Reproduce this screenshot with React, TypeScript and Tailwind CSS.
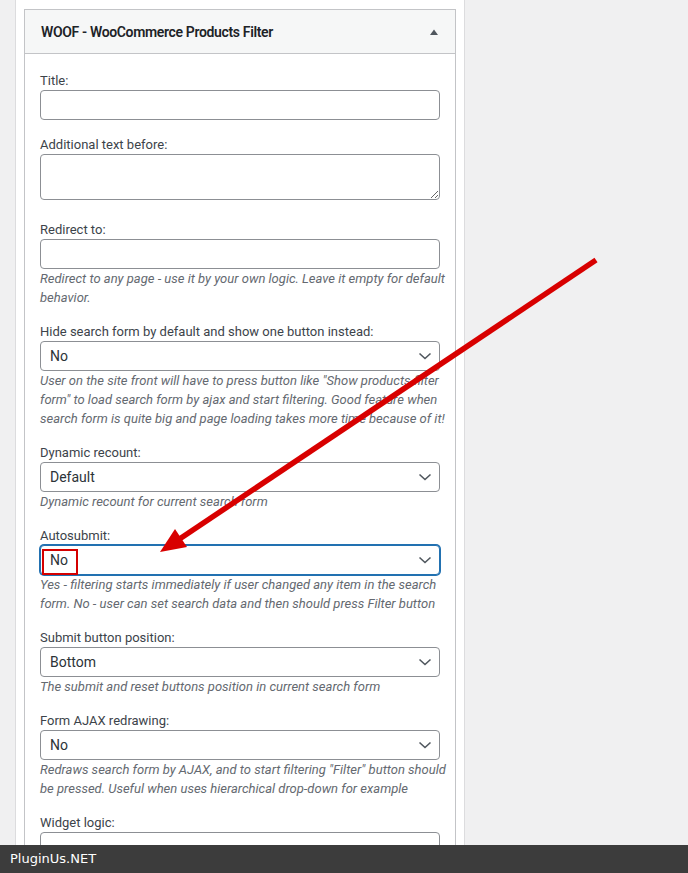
import { useState } from 'react'

type Field = {
  label: string
  kind: 'input' | 'textarea' | 'select'
  value?: string
  desc?: string[]
  focused?: boolean
}

const fields: Field[] = [
  { label: 'Title:', kind: 'input' },
  { label: 'Additional text before:', kind: 'textarea' },
  {
    label: 'Redirect to:',
    kind: 'input',
    desc: ['Redirect to any page - use it by your own logic. Leave it empty for default', 'behavior.'],
  },
  {
    label: 'Hide search form by default and show one button instead:',
    kind: 'select',
    value: 'No',
    desc: [
      'User on the site front will have to press button like "Show products filter',
      'form" to load search form by ajax and start filtering. Good feature when',
      'search form is quite big and page loading takes more time because of it!',
    ],
  },
  {
    label: 'Dynamic recount:',
    kind: 'select',
    value: 'Default',
    desc: ['Dynamic recount for current search form'],
  },
  {
    label: 'Autosubmit:',
    kind: 'select',
    value: 'No',
    focused: true,
    desc: [
      'Yes - filtering starts immediately if user changed any item in the search',
      'form. No - user can set search data and then should press Filter button',
    ],
  },
  {
    label: 'Submit button position:',
    kind: 'select',
    value: 'Bottom',
    desc: ['The submit and reset buttons position in current search form'],
  },
  {
    label: 'Form AJAX redrawing:',
    kind: 'select',
    value: 'No',
    desc: [
      'Redraws search form by AJAX, and to start filtering "Filter" button should',
      'be pressed. Useful when uses hierarchical drop-down for example',
    ],
  },
  { label: 'Widget logic:', kind: 'input' },
]

function Chevron() {
  return (
    <svg width="16" height="16" viewBox="0 0 16 16" className="absolute right-[6px] top-1/2 -translate-y-1/2">
      <path d="M2.5 5.5 L8 10.5 L13.5 5.5" fill="none" stroke="#50575e" strokeWidth="1.6" />
    </svg>
  )
}

function FieldControl({ f }: { f: Field }) {
  if (f.kind === 'textarea') {
    return (
      <div className="pb-[5px]">
        <textarea className="block w-full h-[46px] rounded-[4px] border border-[#8c8f94] bg-white outline-none" />
      </div>
    )
  }
  if (f.kind === 'select') {
    return (
      <div
        className={
          f.focused
            ? 'relative h-[30px] w-full rounded-[4px] border border-[#2271b1] shadow-[0_0_0_1px_#2271b1] bg-white'
            : 'relative h-[30px] w-full rounded-[4px] border border-[#8c8f94] bg-white'
        }
      >
        <span className="absolute left-[9px] top-0 leading-[28px] text-[14px] text-[#2c3338]">{f.value}</span>
        {f.focused && (
          <span className="absolute left-[1px] top-[3px] w-[36px] h-[26px] border-2 border-[#d40000]" />
        )}
        <Chevron />
      </div>
    )
  }
  return <input className="block h-[30px] w-full rounded-[4px] border border-[#8c8f94] bg-white outline-none" />
}

export default function App() {
  const [open] = useState(true)

  return (
    <div
      className="relative h-[873px] w-[688px] overflow-hidden bg-[#f0f0f1]"
      style={{ fontFamily: 'Roboto, "Noto Sans", sans-serif' }}
    >
      <div className="ml-[15px] w-[450px] h-full border-x border-[#dcdcde] bg-white px-[8px] pt-[9px]">
        <div className="border border-[#c3c4c7] bg-white">
          {/* widget header */}
          <div className="flex h-[44px] items-center justify-between border-b border-[#c3c4c7] bg-[#f6f7f7] pl-[16px] pr-[17px]">
            <span className="pt-[1px] text-[14px] font-semibold tracking-[-0.35px] text-[#1d2327]">
              WOOF - WooCommerce Products Filter
            </span>
            <svg width="8" height="6" viewBox="0 0 8 6">
              <path d="M0 6 L4 0.5 L8 6 Z" fill="#50575e" />
            </svg>
          </div>

          {open && (
            <div className="px-[15px] pt-[17px] pb-6">
              {fields.map((f, i) => (
                <div key={f.label} className={i === 0 ? '' : 'mt-[15px]'}>
                  <div className="text-[13px] leading-[19px] text-[#3c434a]">{f.label}</div>
                  <FieldControl f={f} />
                  {f.desc && (
                    <div className="text-[13px] italic leading-[19px] text-[#646970]">
                      {f.desc.map(line => (
                        <div key={line} className="whitespace-nowrap">
                          {line}
                        </div>
                      ))}
                    </div>
                  )}
                </div>
              ))}
            </div>
          )}
        </div>
      </div>

      {/* annotation arrow */}
      <svg className="pointer-events-none absolute inset-0" width="688" height="873" viewBox="0 0 688 873">
        <line x1="596" y1="260" x2="178" y2="540" stroke="#d80000" strokeWidth="5.5" />
        <polygon points="160,552 187,547 175,529" fill="#d80000" />
      </svg>

      {/* watermark bar */}
      <div
        className="absolute bottom-0 left-0 right-0 flex h-[28px] items-center bg-[#3c3c3c] pl-[10px] text-[13px] text-white"
        style={{ fontFamily: '"DejaVu Sans", sans-serif' }}
      >
        PluginUs.NET
      </div>
    </div>
  )
}
